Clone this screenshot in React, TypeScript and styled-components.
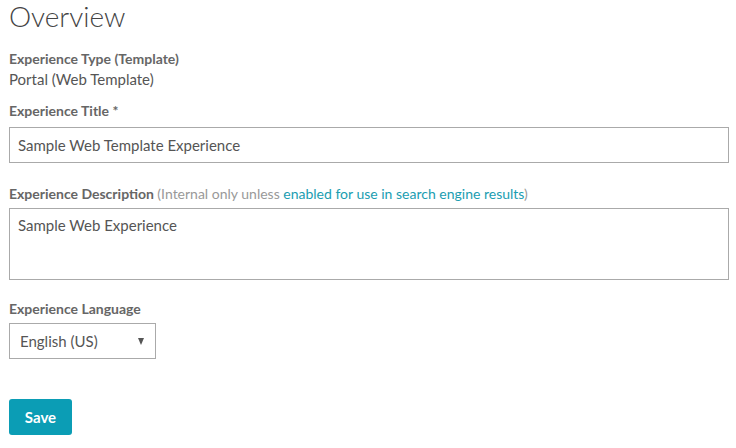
import React from "react";
import styled, { createGlobalStyle } from "styled-components";

const Global = createGlobalStyle`
  html, body { margin: 0; padding: 0; background: #fff; }
  body { font-family: Lato, "Liberation Sans", sans-serif; color: #555; }
  * { box-sizing: border-box; }
`;

const Page = styled.div`
  padding: 0 7px 0 9px;
  display: flex;
  flex-direction: column;
`;

const Title = styled.h1`
  margin: 0;
  font-size: 28px;
  font-weight: 300;
  line-height: 32px;
  color: #444;
`;

const Field = styled.div<{ $mt: number }>`
  margin-top: ${(p) => p.$mt}px;
  display: flex;
  flex-direction: column;
`;

const Label = styled.div`
  font-size: 14px;
  font-weight: 700;
  line-height: 18px;
  color: #666;
`;

const Hint = styled.span`
  font-weight: 400;
  color: #999;
`;

const Link = styled.a`
  color: #1a9db1;
  text-decoration: none;
  font-weight: 400;
`;

const Value = styled.div`
  margin-top: 1px;
  font-size: 15px;
  line-height: 20px;
  color: #555;
`;

const Input = styled.div`
  margin-top: 7px;
  height: 36px;
  border: 1px solid #aaa;
  padding: 0 8px;
  font-size: 15px;
  display: flex;
  align-items: center;
  color: #555;
`;

const TextArea = styled.div`
  margin-top: 5px;
  height: 72px;
  border: 1px solid #aaa;
  padding: 7px 8px;
  font-size: 15px;
  color: #555;
`;

const Select = styled.div`
  margin-top: 5px;
  width: 147px;
  height: 36px;
  border: 1px solid #aaa;
  padding: 0 11px 0 10px;
  display: flex;
  align-items: center;
  justify-content: space-between;
  font-size: 15px;
  color: #555;
`;

const Arrow = styled.span`
  width: 0;
  height: 0;
  border-left: 3.5px solid transparent;
  border-right: 3.5px solid transparent;
  border-top: 7px solid #555;
`;

const Button = styled.button`
  margin-top: 40px;
  align-self: flex-start;
  width: 63px;
  height: 36px;
  border: none;
  border-radius: 3px;
  background: #0b9db5;
  color: #fff;
  font-family: Lato, "Liberation Sans", sans-serif;
  font-size: 15px;
  font-weight: 700;
  cursor: pointer;
`;

export default function App() {
  return (
    <>
      <Global />
      <Page>
        <Title>Overview</Title>
        <Field $mt={18}>
          <Label>Experience Type (Template)</Label>
          <Value>Portal (Web Template)</Value>
        </Field>
        <Field $mt={13}>
          <Label>Experience Title *</Label>
          <Input>Sample Web Template Experience</Input>
        </Field>
        <Field $mt={22}>
          <Label>
            Experience Description <Hint>(Internal only unless <Link>enabled for use in search engine results</Link>)</Hint>
          </Label>
          <TextArea>Sample Web Experience</TextArea>
        </Field>
        <Field $mt={20}>
          <Label>Experience Language</Label>
          <Select>
            English (US)
            <Arrow />
          </Select>
        </Field>
        <Button>Save</Button>
      </Page>
    </>
  );
}
